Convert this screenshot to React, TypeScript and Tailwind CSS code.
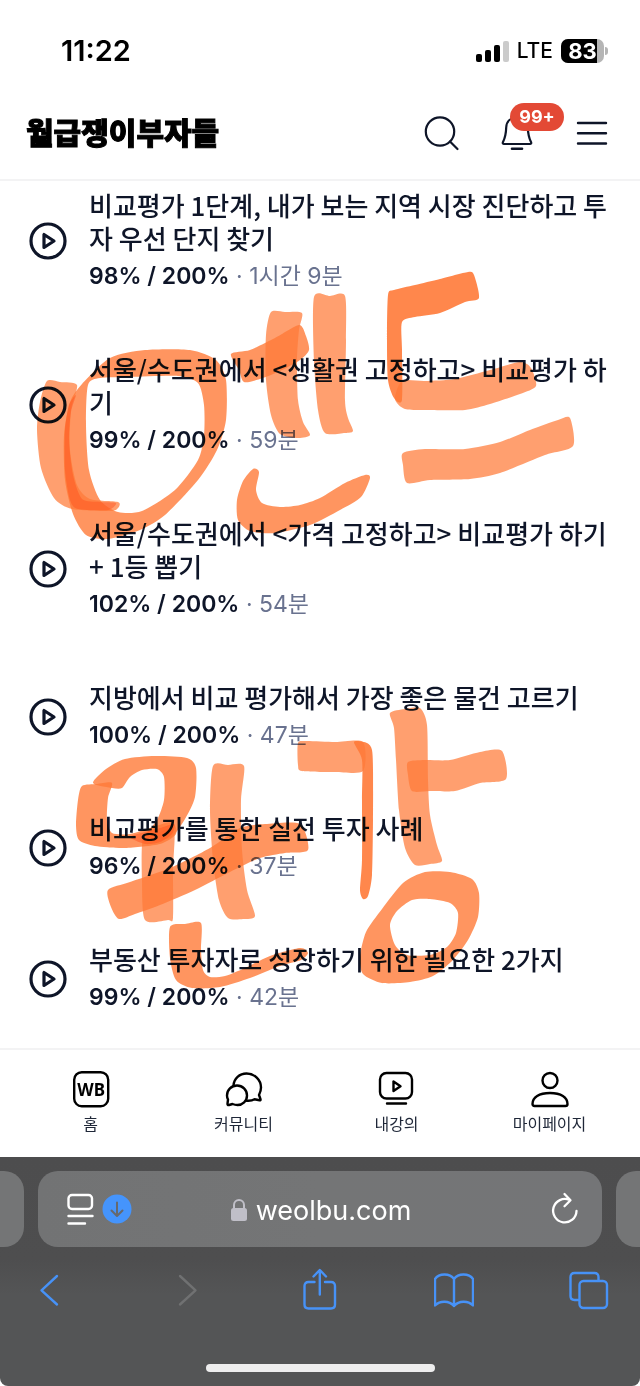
import React from "react"

type Point = [number, number]

type Lecture = {
  title: string
  progress: string
  duration: string
}

type MarkerStroke = {
  outline: Point[]
  hole?: Point[]
  opacity: number
}

const lectures: Lecture[] = [
  {
    title: "비교평가 1단계, 내가 보는 지역 시장 진단하고 투자 우선 단지 찾기",
    progress: "98% / 200%",
    duration: "1시간 9분",
  },
  {
    title: "서울/수도권에서 <생활권 고정하고> 비교평가 하기",
    progress: "99% / 200%",
    duration: "59분",
  },
  {
    title: "서울/수도권에서 <가격 고정하고> 비교평가 하기 + 1등 뽑기",
    progress: "102% / 200%",
    duration: "54분",
  },
  {
    title: "지방에서 비교 평가해서 가장 좋은 물건 고르기",
    progress: "100% / 200%",
    duration: "47분",
  },
  {
    title: "비교평가를 통한 실전 투자 사례",
    progress: "96% / 200%",
    duration: "37분",
  },
  {
    title: "부동산 투자자로 성장하기 위한 필요한 2가지",
    progress: "99% / 200%",
    duration: "42분",
  },
]

const LIGHT = 0.72
const MID = 0.8
const DEEP = 0.9

const markerStrokes: MarkerStroke[] = [
  {
    opacity: LIGHT,
    outline: [[47, 381], [60, 382], [77, 385], [71, 410], [70, 450], [77, 485], [90, 499], [118, 502], [118, 508], [110, 511], [72, 509], [54, 498], [41, 468], [37, 430], [40, 402]],
  },
  {
    opacity: MID,
    outline: [[82, 384], [110, 358], [145, 350], [190, 350], [216, 360], [226, 380], [226, 420], [217, 450], [198, 480], [165, 515], [140, 530], [108, 539], [86, 535], [73, 514], [65, 480], [64, 435], [70, 402]],
    hole: [[88, 385], [100, 378], [130, 377], [178, 376], [198, 383], [204, 405], [204, 435], [198, 460], [175, 490], [142, 511], [118, 512], [100, 500], [89, 470], [86, 425]],
  },
  {
    opacity: LIGHT,
    outline: [[271, 312], [285, 312], [302, 313], [299, 330], [297, 360], [298, 400], [303, 422], [310, 435], [298, 438], [280, 434], [271, 415], [266, 380], [266, 335]],
  },
  {
    opacity: MID,
    outline: [[231, 354], [250, 350], [275, 338], [299, 325], [306, 336], [309, 350], [300, 360], [280, 371], [260, 379], [244, 382], [239, 370]],
  },
  {
    opacity: LIGHT,
    outline: [[314, 297], [330, 296], [345, 296], [346, 340], [345, 400], [348, 418], [353, 431], [345, 433], [325, 433], [318, 410], [314, 360]],
  },
  {
    opacity: MID,
    outline: [[253, 469], [259, 472], [256, 490], [262, 503], [280, 507], [300, 505], [320, 498], [345, 483], [365, 475], [370, 478], [361, 497], [340, 510], [310, 525], [275, 533], [250, 531], [238, 520], [237, 500], [243, 481]],
  },
  {
    opacity: DEEP,
    outline: [[388, 295], [394, 290], [415, 285], [440, 279], [468, 272], [474, 275], [479, 298], [465, 302], [440, 313], [415, 317], [402, 322], [402, 350], [402, 400], [394, 398], [388, 380], [387, 340]],
  },
  {
    opacity: LIGHT,
    outline: [[402, 381], [425, 381], [455, 379], [490, 370], [520, 362], [531, 368], [536, 386], [520, 394], [490, 404], [465, 410], [430, 410], [405, 409], [395, 399]],
  },
  {
    opacity: LIGHT,
    outline: [[403, 453], [425, 449], [465, 449], [500, 442], [530, 430], [558, 420], [570, 418], [573, 446], [545, 455], [500, 473], [470, 479], [430, 480], [407, 483], [403, 465]],
  },
  {
    opacity: MID,
    outline: [[93, 783], [106, 769], [125, 759], [155, 756], [187, 758], [196, 768], [195, 797], [185, 819], [170, 838], [143, 840], [157, 820], [164, 800], [164, 777], [157, 769], [142, 770], [130, 777], [122, 788], [112, 788]],
  },
  {
    opacity: MID,
    outline: [[82, 786], [97, 784], [112, 783], [108, 798], [107, 820], [112, 833], [130, 834], [150, 828], [172, 822], [176, 834], [160, 844], [125, 848], [95, 846], [79, 840], [76, 825], [78, 800]],
  },
  {
    opacity: LIGHT,
    outline: [[143, 838], [158, 833], [174, 830], [173, 870], [173, 918], [168, 920], [145, 920], [142, 880]],
  },
  {
    opacity: MID,
    outline: [[108, 890], [130, 882], [170, 868], [210, 848], [240, 828], [265, 824], [300, 824], [308, 850], [285, 853], [260, 858], [230, 872], [195, 890], [160, 905], [135, 914], [119, 919], [111, 907]],
  },
  {
    opacity: LIGHT,
    outline: [[213, 766], [228, 765], [244, 766], [241, 800], [242, 850], [247, 890], [255, 916], [243, 919], [228, 918], [219, 900], [213, 860], [210, 810]],
  },
  {
    opacity: MID,
    outline: [[170, 927], [185, 924], [201, 923], [201, 950], [203, 970], [210, 977], [225, 976], [245, 968], [270, 956], [300, 948], [308, 953], [301, 960], [280, 966], [250, 978], [220, 987], [192, 988], [176, 980], [170, 958]],
  },
  {
    opacity: LIGHT,
    outline: [[298, 743], [306, 741], [335, 742], [363, 742], [363, 771], [335, 772], [302, 771], [298, 765]],
  },
  {
    opacity: DEEP,
    outline: [[354, 742], [367, 743], [372, 750], [373, 770], [373, 820], [372, 875], [368, 896], [363, 899], [360, 890], [362, 860], [362, 800], [362, 760]],
  },
  {
    opacity: LIGHT,
    outline: [[390, 713], [405, 709], [420, 708], [427, 725], [428, 780], [430, 815], [437, 845], [442, 861], [430, 864], [415, 865], [405, 848], [399, 810], [396, 760], [394, 728]],
  },
  {
    opacity: LIGHT,
    outline: [[408, 762], [425, 760], [450, 760], [480, 752], [502, 751], [506, 779], [480, 783], [455, 791], [430, 791], [412, 791], [408, 775]],
  },
  {
    opacity: MID,
    outline: [[425, 872], [450, 872], [472, 879], [479, 893], [478, 917], [468, 940], [452, 961], [433, 976], [410, 982], [382, 983], [363, 974], [360, 957], [366, 932], [382, 909], [403, 883]],
    hole: [[412, 900], [430, 899], [450, 903], [458, 913], [456, 933], [447, 947], [430, 955], [407, 955], [395, 945], [390, 925], [397, 911]],
  },
]

// spots where the pen went over wet ink
const darkOverlaps: Point[][] = [
  [[76, 395], [71, 412], [69, 440], [73, 475], [82, 499], [100, 502], [116, 503], [108, 510], [78, 509], [70, 500], [65, 470], [65, 430], [69, 405]],
  [[130, 837], [145, 832], [160, 828], [174, 824], [172, 834], [160, 842], [145, 844]],
]

// closed Catmull-Rom curve through the points
const smoothPath = (points: Point[]) => {
  const n = points.length
  let d = `M${points[0][0]} ${points[0][1]}`
  for (let i = 0; i < n; i++) {
    const [p0, p1, p2, p3] = [
      points[(i + n - 1) % n],
      points[i],
      points[(i + 1) % n],
      points[(i + 2) % n],
    ]
    d += `C${p1[0] + (p2[0] - p0[0]) / 8} ${p1[1] + (p2[1] - p0[1]) / 8}`
    d += ` ${p2[0] - (p3[0] - p1[0]) / 8} ${p2[1] - (p3[1] - p1[1]) / 8}`
    d += ` ${p2[0]} ${p2[1]}`
  }
  return d + "Z"
}

const MarkerDrawing: React.FC = () => (
  <svg
    width="640"
    height="1048"
    viewBox="0 0 640 1048"
    className="absolute top-0 left-0 pointer-events-none mix-blend-multiply"
    aria-hidden="true"
  >
    {markerStrokes.map((stroke, i) => (
      <path
        key={i}
        d={smoothPath(stroke.outline) + (stroke.hole ? smoothPath(stroke.hole) : "")}
        fill="#ff7a38"
        fillRule="evenodd"
        opacity={stroke.opacity}
      />
    ))}
    {darkOverlaps.map((points, i) => (
      <path key={i} d={smoothPath(points)} fill="#ff4d18" opacity="0.45" />
    ))}
  </svg>
)

const StatusBar: React.FC = () => (
  <div className="flex items-center justify-between h-[102px] pl-[61px] pr-8 font-['Inter',sans-serif] text-black">
    <span className="text-[29px] font-semibold">11:22</span>
    <div className="flex items-center">
      <svg width="34" height="22" viewBox="0 0 34 22" className="mr-2">
        <rect x="1" y="14" width="6" height="8" rx="2" />
        <rect x="10" y="10" width="6" height="12" rx="2" />
        <rect x="19" y="5" width="6" height="17" rx="2" />
        <rect x="28" y="1" width="6" height="21" rx="2" fill="#cbcbcb" />
      </svg>
      <span className="mr-2 text-[21px] font-medium">LTE</span>
      <div className="relative w-[43px] h-6 overflow-hidden rounded-[7px] bg-[#b5b5b5]">
        <div className="w-9 h-full bg-black" />
        <span className="absolute inset-0 text-[22px] leading-6 font-bold text-center text-white">83</span>
      </div>
      <div className="w-[3px] h-2 ml-px rounded-r-full bg-[#b5b5b5]" />
    </div>
  </div>
)

const Header: React.FC = () => (
  <header className="flex items-center justify-between h-[79px] pb-4 pl-[26px] pr-[30px] border-b-2 border-[#f3f3f4]">
    <a href="#" className="pb-1 text-[30px] leading-none font-black text-black [-webkit-text-stroke:1px_black]">
      월급쟁이부자들
    </a>
    <div className="flex gap-[39px]">
      <button aria-label="검색">
        <svg width="36" height="36" viewBox="0 0 36 36" fill="none" stroke="currentColor" strokeWidth="2.2" strokeLinecap="round">
          <circle cx="16" cy="16.500" r="14.200" />
          <path d="M26 26.500l7.500 7.500" />
        </svg>
      </button>
      <button aria-label="알림 99+" className="relative">
        <svg width="36" height="36" viewBox="0 0 36 36" fill="none" stroke="currentColor" strokeWidth="2.200" strokeLinecap="round" strokeLinejoin="round">
          <path d="M18 2.500C11.500 2.500 7.500 6.500 7.200 12.500C7 20 6 23 4 27C3.400 28.300 4 29 5 29H31C32 29 32.600 28.300 32 27C30 23 29 20 28.800 12.500C28.500 6.500 24.500 2.500 18 2.500Z" />
          <path d="M13 33.700h10" strokeWidth="2.600" />
        </svg>
        <span className="absolute -top-3 left-[11px] w-[54px] h-7 rounded-full bg-[#e34935] font-['Inter',sans-serif] text-lg leading-7 font-bold text-white">
          99+
        </span>
      </button>
      <button aria-label="메뉴">
        <svg width="36" height="36" viewBox="0 0 36 36" stroke="currentColor" strokeWidth="2.400" strokeLinecap="round">
          <path d="M4 8h28M4 18.300h28M4 28.500h28" />
        </svg>
      </button>
    </div>
  </header>
)

const LectureRow: React.FC<{ lecture: Lecture }> = ({ lecture }) => (
  <li>
    <a href="#" className="flex items-center">
      <svg width="38" height="38" viewBox="0 0 38 38" fill="none" stroke="currentColor" strokeWidth="3.200" strokeLinejoin="round" className="shrink-0 mr-[22px]">
        <circle cx="19" cy="19" r="17" />
        <path d="M15 12.500v13l10-6.500z" />
      </svg>
      <div className="pb-[2px]">
        <h3 className="text-[26px] leading-[33px] font-medium break-all">{lecture.title}</h3>
        <p className="mt-[6px] font-['Inter','Noto_Sans_CJK_KR',sans-serif] text-[23px] leading-8 text-[#69728f]">
          <strong className="font-semibold text-[#0e1528]">{lecture.progress}</strong> · {lecture.duration}
        </p>
      </div>
    </a>
  </li>
)

const NavItem: React.FC<{ label: string; children: React.ReactNode }> = ({ label, children }) => (
  <a href="#" className="flex flex-col items-center flex-1">
    <svg width="40" height="40" viewBox="0 0 40 40" fill="none" stroke="black" strokeWidth="2.400" strokeLinecap="round" strokeLinejoin="round">
      {children}
    </svg>
    <span className="mt-px text-base leading-6 text-[#1f2738]">{label}</span>
  </a>
)

const BottomNav: React.FC = () => (
  <nav className="flex h-[109px] px-[14px] pt-5 border-t-2 border-[#f3f3f4]">
    <NavItem label="홈">
      <rect x="3.200" y="2.200" width="34" height="34" rx="7.500" />
      <text x="20.200" y="25.500" textAnchor="middle" fill="black" stroke="none" fontFamily="Noto Sans" fontSize="17" fontWeight="700">
        WB
      </text>
    </NavItem>
    <NavItem label="커뮤니티">
      <path d="M9.500 15.500C10 8.500 15.500 3.500 22.500 3.500C30.500 3.500 37 9.800 37 17.500C37 20.500 36 23 35 25L36.500 29.200Q36.800 30.500 35.500 30.300L30.500 29.300C28.500 30.500 26 31 22.500 30.700" />
      <path d="M13 15.500C18.500 15.500 23 20 23 25.500C23 31 18.500 35 13.500 35C11.500 35 10 34.600 8.500 34L5 35Q3.300 35.300 3.500 33.600L4 29.500C3.200 28 3 27 3 25.500C3 20 7.500 15.500 13 15.500Z" />
    </NavItem>
    <NavItem label="내강의">
      <rect x="3" y="3" width="32" height="25.500" rx="6.500" />
      <path d="M16.500 11.500v9.500l7-4.700zM10 33.500h19" />
    </NavItem>
    <NavItem label="마이페이지">
      <circle cx="20" cy="10.500" r="7.500" />
      <path d="M2.500 34C2.500 27.500 9 23 20 23S37.500 27.500 37.500 34Q37.500 36 35.500 36H4.500Q2.500 36 2.500 34Z" />
    </NavItem>
  </nav>
)

const AddressBar: React.FC = () => (
  <div className="flex gap-[14px]">
    <div className="w-6 h-[76px] rounded-r-[20px] bg-[#747576]" />
    <div className="flex items-center justify-between flex-1 h-[76px] pl-7 pr-6 rounded-[20px] bg-gradient-to-r from-[#727374] via-[#747576] to-[#747577] text-white">
      <div className="flex items-center gap-2">
        <button aria-label="페이지 메뉴">
          <svg width="28" height="34" viewBox="0 0 28 34" fill="none" stroke="currentColor" strokeWidth="2.400" strokeLinecap="round">
            <rect x="2.500" y="3" width="23.500" height="14" rx="3.500" />
            <path d="M2.500 24h24M2.500 31.500h16.500" />
          </svg>
        </button>
        <button aria-label="다운로드">
          <svg width="30" height="30" viewBox="0 0 30 30" fill="none" stroke="#66696e" strokeWidth="2" strokeLinecap="round" strokeLinejoin="round">
            <circle cx="15" cy="15" r="14.500" fill="#4594fc" stroke="none" />
            <path d="M15 8.500v13M9.500 16.500l5.500 5.500l5.500-5.500" />
          </svg>
        </button>
      </div>
      <button className="flex items-center gap-2 pt-1 pr-[41px]">
        <svg width="18" height="24" viewBox="0 0 18 24" fill="none">
          <rect x="1" y="9" width="16" height="13" rx="2.500" fill="#c0bfc8" />
          <path d="M4 10V6a5 5 0 0 1 10 0v4" stroke="#c0bfc8" strokeWidth="2" />
        </svg>
        <span className="font-['Inter',sans-serif] text-[27px]">weolbu.com</span>
      </button>
      <button aria-label="새로고침">
        <svg width="28" height="34" viewBox="0 0 28 34" fill="none" stroke="currentColor" strokeWidth="2.300" strokeLinecap="round" strokeLinejoin="round">
          <path d="M26.500 19A11.700 11.700 0 1 1 19.500 8M14.500 2l6 6.200l-6 6" />
        </svg>
      </button>
    </div>
    <div className="w-6 h-[76px] rounded-l-[20px] bg-[#747576]" />
  </div>
)

const ToolbarButton: React.FC<{ label: string; disabled?: boolean; children: React.ReactNode }> = ({
  label,
  disabled,
  children,
}) => (
  <button aria-label={label} disabled={disabled} className="text-[#4792f7] disabled:text-[#707172]">
    <svg width="40" height="44" viewBox="0 0 40 44" fill="none" stroke="currentColor" strokeWidth="2.400" strokeLinecap="round" strokeLinejoin="round">
      {children}
    </svg>
  </button>
)

const BrowserBar: React.FC = () => (
  <footer className="pt-[14px] pb-[14px] rounded-b-lg bg-[linear-gradient(#4d4d4e,#4e4e4f_45%,#545556_60%)]">
    <AddressBar />
    <div className="flex justify-between pt-[21px] pl-[29px] pr-[31px]">
      <ToolbarButton label="뒤로">
        <path d="M28 8L12.500 22.300L28 36.500" />
      </ToolbarButton>
      <ToolbarButton label="앞으로" disabled>
        <path d="M16 8L31.500 22.300L16 36.500" />
      </ToolbarButton>
      <ToolbarButton label="공유">
        <path d="M15.500 14H9.500Q5.500 14 5.500 18V36.500Q5.500 40.500 9.500 40.500H32Q36 40.500 36 36.500V18Q36 14 32 14H26M20.800 26.500V3M14.500 8.500L20.800 2L27 8.500" />
      </ToolbarButton>
      <ToolbarButton label="책갈피">
        <path d="M20 11C17.500 7.500 14 6.500 10.500 6.500C6.500 6.500 3 8 1 11V37.500C6 32.500 15 32.500 20 38C25 32.500 34 32.500 39 37.500V11C37 8 33.500 6.500 29.500 6.500C26 6.500 22.500 7.500 20 11V38" />
      </ToolbarButton>
      <ToolbarButton label="탭">
        <rect x="10.500" y="13" width="27.500" height="27" rx="4" />
        <path d="M29.500 12V9Q29.500 5 25.500 5H5.500Q1.500 5 1.500 9V28Q1.500 32 5.500 32H9.500" />
      </ToolbarButton>
    </div>
    <div className="w-[229px] h-2 mx-auto mt-[52px] rounded-full bg-[#eeeeee]" />
  </footer>
)

export default function App() {
  return (
    <div className="relative bg-white text-[#0e1528] font-['Noto_Sans_CJK_KR',sans-serif]">
      <StatusBar />
      <Header />
      <main className="pt-[7px] pb-[33px] pl-[29px] pr-[30px]">
        <ul className="flex flex-col gap-[58px]">
          {lectures.map((lecture) => (
            <LectureRow key={lecture.title} lecture={lecture} />
          ))}
        </ul>
      </main>
      <BottomNav />
      <BrowserBar />
      <MarkerDrawing />
    </div>
  )
}
